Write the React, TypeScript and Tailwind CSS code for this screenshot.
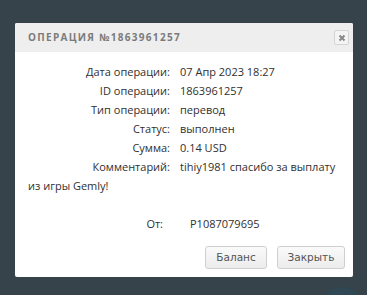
import React from "react";

const rows: [string, string][] = [
  ["Дата операции:", "07 Апр 2023 18:27"],
  ["ID операции:", "1863961257"],
  ["Тип операции:", "перевод"],
  ["Статус:", "выполнен"],
  ["Сумма:", "0.14 USD"],
  ["Комментарий:", "tihiy1981 спасибо за выплату"],
];

export default function App() {
  return (
    <div className="relative w-[367px] h-[295px] overflow-hidden bg-[#36434b] pt-[23px] pl-[15px]" style={{ fontFamily: "'Open Sans', 'DejaVu Sans', sans-serif" }}>
      <div className="w-[338px] h-[254px] bg-white rounded-[2px] flex flex-col">
        <div className="h-[29px] bg-[#eeeeee] flex items-center justify-between pl-[13px] pr-[4px] rounded-t-[2px]">
          <span className="text-[10px] font-bold tracking-[1.3px] text-[#7b7b7b]">ОПЕРАЦИЯ №1863961257</span>
          <span className="w-[15px] h-[15px] border border-[#d4d4d4] rounded-[2px] bg-[#f4f4f4] flex items-center justify-center">
            <svg width="8" height="8" viewBox="0 0 8 8">
              <path d="M1.5 1.5 L6.5 6.5 M6.5 1.5 L1.5 6.5" stroke="#888" strokeWidth="2" />
            </svg>
          </span>
        </div>
        <div className="pt-[10px] px-[13px] text-[11px] leading-[19px] text-[#303030]">
          {rows.map(([l, v]) => (
            <div key={l} className="flex">
              <span className="w-[142px] text-right shrink-0">{l}</span>
              <span className="ml-[10px]">{v}</span>
            </div>
          ))}
          <div>из игры Gemly!</div>
          <div className="flex mt-[19px]">
            <span className="w-[135px] text-right shrink-0">От:</span>
            <span className="ml-[27px]">P1087079695</span>
          </div>
        </div>
        <div className="mt-auto flex justify-end gap-[10px] pr-[8px] pb-[8px]">
          <button className="w-[62px] h-[23px] border border-[#cfcfcf] rounded-[3px] bg-gradient-to-b from-[#fafafa] to-[#ececec] text-[10.5px] text-[#555]" style={{ fontFamily: "'DejaVu Sans', sans-serif" }}>Баланс</button>
          <button className="w-[68px] h-[23px] border border-[#cfcfcf] rounded-[3px] bg-gradient-to-b from-[#fafafa] to-[#ececec] text-[10.5px] text-[#555]" style={{ fontFamily: "'DejaVu Sans', sans-serif" }}>Закрыть</button>
        </div>
      </div>
      <div className="absolute left-[322px] top-[287px] w-[40px] h-[40px] rounded-full bg-[#2f4853]" />
    </div>
  );
}
